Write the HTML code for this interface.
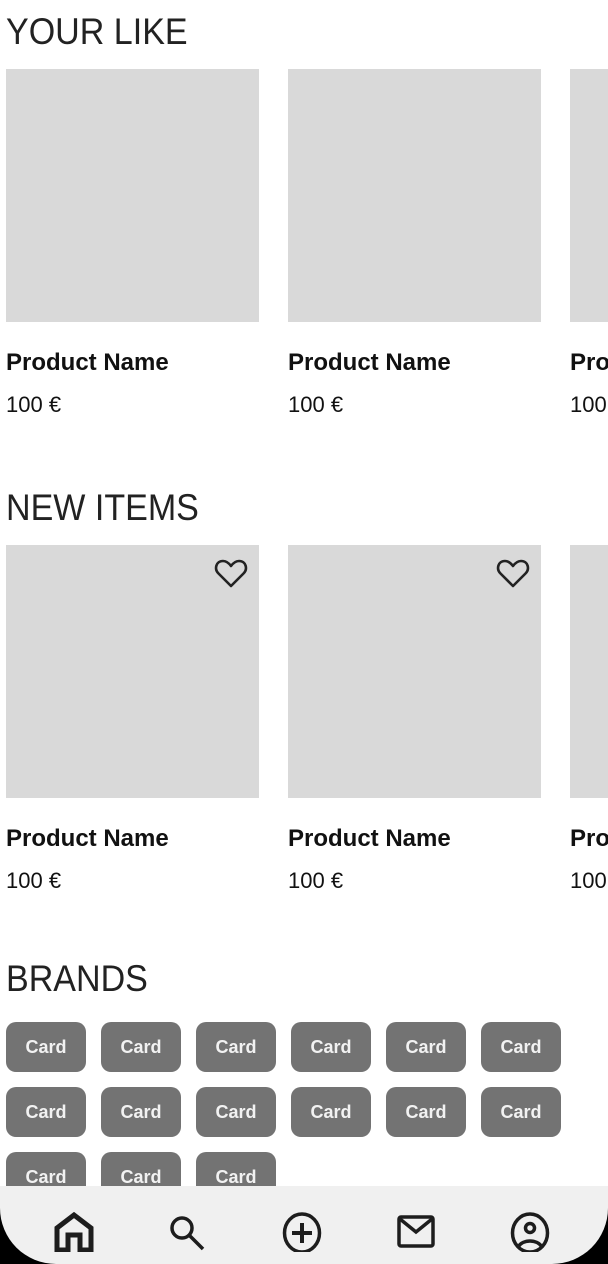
<!DOCTYPE html>
<html style="overflow:hidden"><head><meta charset="utf-8"><style>
body{margin:0;width:608px;height:1264px;position:relative;overflow:hidden;background:#fff;font-family:"Liberation Sans",sans-serif;color:#1d1d1d}
.h{position:absolute;left:6px;font-size:37px;line-height:40px;transform:scaleX(.92);transform-origin:left;color:#222;white-space:nowrap}
.img{position:absolute;width:253px;height:253px;background:#d9d9d9}
.n{position:absolute;font-size:24px;font-weight:bold;color:#111;white-space:nowrap}
.p{position:absolute;font-size:22px;color:#111;white-space:nowrap}
.c{position:absolute;width:80px;height:50px;background:#737373;border-radius:10px;color:#f2f2f2;font-size:18px;font-weight:bold;text-align:center;line-height:50px}
.nav{position:absolute;left:0;top:1186px;width:608px;height:78px;background:#000}
.navi{position:absolute;inset:0;background:#f0f0f0;border-radius:0 0 56px 56px}
.ic{position:absolute;top:1212px;width:40px;height:40px}
.wrap{position:absolute;left:0;top:0;width:608px;height:1264px;overflow:hidden}
</style></head><body><div class="wrap">
<div class="h" style="top:12px">YOUR LIKE</div>
<div class="img" style="left:6px;top:69px"></div>
<div class="img" style="left:288px;top:69px"></div>
<div class="img" style="left:570px;top:69px"></div>
<div class="n" style="left:6px;top:349px">Product Name</div>
<div class="n" style="left:288px;top:349px">Product Name</div>
<div class="n" style="left:570px;top:349px">Product Name</div>
<div class="p" style="left:6px;top:392px">100 €</div>
<div class="p" style="left:288px;top:392px">100 €</div>
<div class="p" style="left:570px;top:392px">100 €</div>

<div class="h" style="top:488px">NEW ITEMS</div>
<div class="img" style="left:6px;top:545px"></div>
<div class="img" style="left:288px;top:545px"></div>
<div class="img" style="left:570px;top:545px"></div>
<svg style="position:absolute;left:214px;top:557px" width="34" height="32" viewBox="0 0 34 32"><path d="M17 29 L4.5 16.5 C0 12 2 4 9 4 C13 4 15.5 7 17 9 C18.5 7 21 4 25 4 C32 4 34 12 29.5 16.5 Z" fill="none" stroke="#222" stroke-width="2.6" stroke-linejoin="round"/></svg>
<svg style="position:absolute;left:496px;top:557px" width="34" height="32" viewBox="0 0 34 32"><path d="M17 29 L4.5 16.5 C0 12 2 4 9 4 C13 4 15.5 7 17 9 C18.5 7 21 4 25 4 C32 4 34 12 29.5 16.5 Z" fill="none" stroke="#222" stroke-width="2.6" stroke-linejoin="round"/></svg>
<div class="n" style="left:6px;top:825px">Product Name</div>
<div class="n" style="left:288px;top:825px">Product Name</div>
<div class="n" style="left:570px;top:825px">Product Name</div>
<div class="p" style="left:6px;top:868px">100 €</div>
<div class="p" style="left:288px;top:868px">100 €</div>
<div class="p" style="left:570px;top:868px">100 €</div>

<div class="h" style="top:959px">BRANDS</div>
<div class="c" style="left:6px;top:1022px">Card</div>
<div class="c" style="left:101px;top:1022px">Card</div>
<div class="c" style="left:196px;top:1022px">Card</div>
<div class="c" style="left:291px;top:1022px">Card</div>
<div class="c" style="left:386px;top:1022px">Card</div>
<div class="c" style="left:481px;top:1022px">Card</div>
<div class="c" style="left:6px;top:1087px">Card</div>
<div class="c" style="left:101px;top:1087px">Card</div>
<div class="c" style="left:196px;top:1087px">Card</div>
<div class="c" style="left:291px;top:1087px">Card</div>
<div class="c" style="left:386px;top:1087px">Card</div>
<div class="c" style="left:481px;top:1087px">Card</div>
<div class="c" style="left:6px;top:1152px">Card</div>
<div class="c" style="left:101px;top:1152px">Card</div>
<div class="c" style="left:196px;top:1152px">Card</div>

<div class="nav"><div class="navi"></div></div>
<svg class="ic" style="left:54px" viewBox="0 0 40 40"><path d="M3 38 V16 L20 3 L37 16 V38 H26 V23 H14 V38 Z" fill="none" stroke="#1d1d1d" stroke-width="5" stroke-linejoin="miter"/></svg>
<svg class="ic" style="left:166px" viewBox="0 0 40 40"><circle cx="16" cy="16" r="10" fill="none" stroke="#1d1d1d" stroke-width="3.5"/><path d="M23 23 L37 37" stroke="#1d1d1d" stroke-width="3.5"/></svg>
<svg class="ic" style="left:282px" viewBox="0 0 40 40"><ellipse cx="20" cy="21" rx="17.5" ry="19" fill="none" stroke="#1d1d1d" stroke-width="3.5"/><path d="M20 11 V31 M10 21 H30" stroke="#1d1d1d" stroke-width="4"/></svg>
<svg class="ic" style="left:396px" viewBox="0 0 40 40"><rect x="3" y="5" width="34" height="29" rx="2" fill="none" stroke="#1d1d1d" stroke-width="3.5"/><path d="M4 7 L20 20 L36 7" fill="none" stroke="#1d1d1d" stroke-width="3.5"/></svg>
<svg class="ic" style="left:510px" viewBox="0 0 40 40"><ellipse cx="20" cy="21" rx="17.5" ry="19" fill="none" stroke="#1d1d1d" stroke-width="3.5"/><circle cx="20" cy="16" r="4.5" fill="none" stroke="#1d1d1d" stroke-width="3.5"/><path d="M8 35 C13 27 27 27 32 35" fill="none" stroke="#1d1d1d" stroke-width="3.5"/></svg>
</div></body></html>
